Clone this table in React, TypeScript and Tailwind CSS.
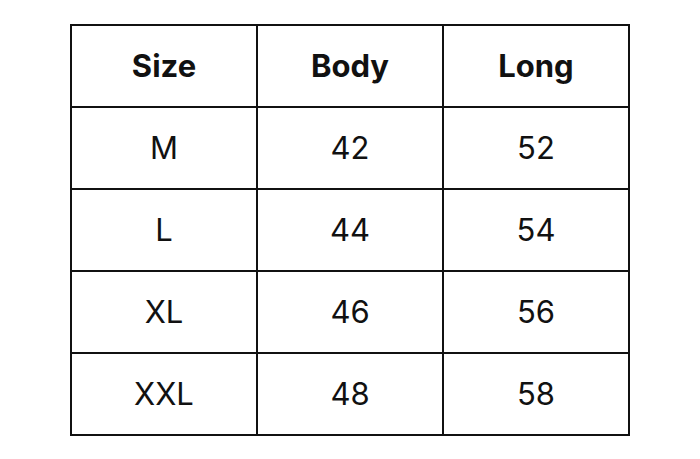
import React from "react";

const rows = [
  ["M", "42", "52"],
  ["L", "44", "54"],
  ["XL", "46", "56"],
  ["XXL", "48", "58"],
];

export default function App() {
  return (
    <div className="w-[700px] h-[459px] bg-white pt-[24px] pl-[70px]" style={{ fontFamily: "Inter, 'Noto Sans', sans-serif" }}>
      <table className="border-collapse w-[560px] text-[#111] table-fixed">
        <thead>
          <tr className="h-[82px]">
            {["Size", "Body", "Long"].map((h) => (
              <th key={h} className="border-2 border-[#111] text-[31px] font-bold text-center align-middle p-0">
                {h}
              </th>
            ))}
          </tr>
        </thead>
        <tbody>
          {rows.map((r) => (
            <tr key={r[0]} className="h-[82px]">
              {r.map((c, i) => (
                <td key={i} className="border-2 border-[#111] text-[31px] font-normal text-center align-middle p-0">
                  {c}
                </td>
              ))}
            </tr>
          ))}
        </tbody>
      </table>
    </div>
  );
}
